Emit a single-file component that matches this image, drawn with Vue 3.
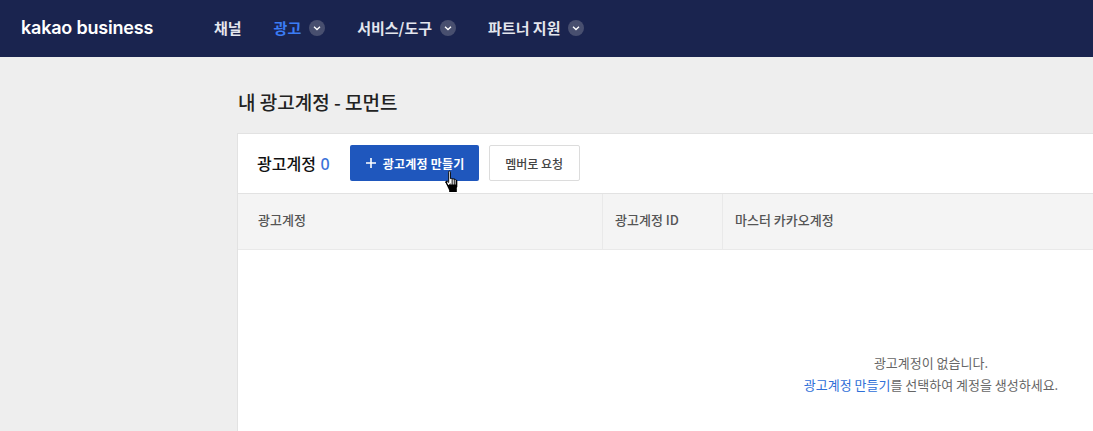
<script setup>
const navItems = [
  { label: '채널', arrow: false, active: false },
  { label: '광고', arrow: true, active: true },
  { label: '서비스/도구', arrow: true, active: false },
  { label: '파트너 지원', arrow: true, active: false },
]
</script>

<template>
  <div class="page">
    <header class="gnb">
      <div class="logo">kakao business</div>
      <nav class="nav">
        <a v-for="item in navItems" :key="item.label" class="nav-item" :class="{ active: item.active }">
          <span>{{ item.label }}</span>
          <span v-if="item.arrow" class="chev">
            <svg width="16" height="16" viewBox="0 0 16 16"><path d="M5 6.800 8 9.600 11 6.800" fill="none" stroke="#fff" stroke-width="1.300" /></svg>
          </span>
        </a>
      </nav>
    </header>
    <main class="content">
      <h1 class="title">내 광고계정 - 모먼트</h1>
      <section class="card">
        <div class="toolbar">
          <strong class="count-label">광고계정 <em>0</em></strong>
          <button class="btn primary">
            <svg width="10" height="10" viewBox="0 0 10 10"><path d="M5 0v10M0 5h10" stroke="#fff" stroke-width="1.600" /></svg>
            <span class="primary-text">광고계정 만들기</span>
          </button>
          <button class="btn ghost">멤버로 요청</button>
          <svg class="cursor" width="18" height="23" viewBox="0 0 18 24">
            <path d="M4.500 1.500C5.300.8 6.300 1.200 6.300 2.300V9l1-.2 1 .2 1 .3 1 .1 1.200.5.8 1v5.600l-1 2.800v1H6v-1.500L3 15 1.500 13l.2-1.200 1.300-.1 1.500 1.300V2.300Z" fill="#fff" stroke="#000" stroke-width="1" />
            <path d="M3 15 6 19v3.500h6v-2l1.500-3V11L12 10v5H10.800V9.500H9.800V15H8.600V9H7.600V15H6.300V13.500L4.500 16Z" fill="#000" />
            <path d="M1 12.500 3 11v3l4 5h6v4H5v-2Z" fill="#000" />
          </svg>
        </div>
        <div class="thead">
          <div class="th c1">광고계정</div>
          <div class="th c2">광고계정 ID</div>
          <div class="th c3">마스터 카카오계정</div>
        </div>
        <div class="empty">
          <p>광고계정이 없습니다.</p>
          <p><a>광고계정 만들기</a>를 선택하여 계정을 생성하세요.</p>
        </div>
      </section>
    </main>
  </div>
</template>

<style>
html, body { margin: 0; overflow: hidden; background: #eeeeee; }
</style>

<style scoped>
.page {
  width: 1093px;
  height: 431px;
  overflow: hidden;
  background: #eeeeee;
  font-family: "Noto Sans CJK KR", "Noto Sans", sans-serif;
  color: #222;
}
.gnb {
  height: 57px;
  background: #1a244f;
  display: flex;
  align-items: center;
  box-sizing: border-box;
  padding: 0 0 2px 21px;
}
.logo {
  width: 193px;
  color: #fff;
  font-family: Inter, "Noto Sans", sans-serif;
  font-size: 18px;
  font-weight: 600;
  letter-spacing: -0.2px;
}
.nav { display: flex; align-items: center; gap: 32px; }
.nav-item {
  display: flex;
  align-items: center;
  gap: 8px;
  font-size: 15px;
  font-weight: 700;
  color: #e4e6ee;
}
.nav-item.active { color: #3b7cf5; }
.chev {
  width: 16px;
  height: 16px;
  border-radius: 50%;
  background: #484f6f;
  display: flex;
}
.content { margin-left: 237px; }
.title {
  margin: 0;
  padding: 32px 0 0 1px;
  height: 44px;
  font-size: 19px;
  line-height: 26px;
  font-weight: 500;
  color: #222;
}
.card {
  width: 1388px;
  min-height: 320px;
  box-sizing: border-box;
  background: #fff;
  border: 1px solid #e2e2e2;
}
.toolbar {
  position: relative;
  height: 60px;
  box-sizing: border-box;
  display: flex;
  align-items: center;
  padding: 0 0 1px 19px;
  border-bottom: 1px solid #e2e2e2;
}
.count-label {
  font-size: 16px;
  font-weight: 500;
  color: #111;
  margin-right: 20px;
}
.count-label em { font-style: normal; color: #3b72d9; font-family: "Noto Sans", sans-serif; margin-left: 1px; }
.btn {
  height: 36px;
  box-sizing: border-box;
  border-radius: 2px;
  font-family: inherit;
  font-size: 12px;
  font-weight: 700;
  display: flex;
  align-items: center;
  justify-content: center;
  padding: 0;
}
.primary {
  width: 129px;
  background: #1f57bd;
  border: 0;
  color: #fff;
  gap: 7px;
  padding-left: 2px;
  margin-right: 10px;
}
.primary-text { letter-spacing: 0.2px; }
.ghost {
  width: 91px;
  background: #fff;
  border: 1px solid #dcdcdc;
  color: #444;
  font-weight: 500;
}
.cursor {
  position: absolute;
  left: 206px;
  top: 36px;
}
.thead {
  height: 56px;
  box-sizing: border-box;
  display: flex;
  background: #f4f4f4;
  border-bottom: 1px solid #e9e9e9;
}
.th {
  box-sizing: border-box;
  display: flex;
  align-items: center;
  font-size: 13px;
  font-weight: 500;
  color: #555;
  padding: 0 0 4px 20px;
  border-right: 1px solid #e9e9e9;
}
.c1 { width: 365px; }
.c2 { width: 120px; padding-left: 12px; }
.c3 { flex: 1; padding-left: 12px; border-right: 0; }
.empty {
  padding-top: 102px;
  text-align: center;
  font-size: 13px;
  line-height: 22px;
  color: #666;
}
.empty p { margin: 0; }
.empty a { color: #2f6fd8; }
</style>
